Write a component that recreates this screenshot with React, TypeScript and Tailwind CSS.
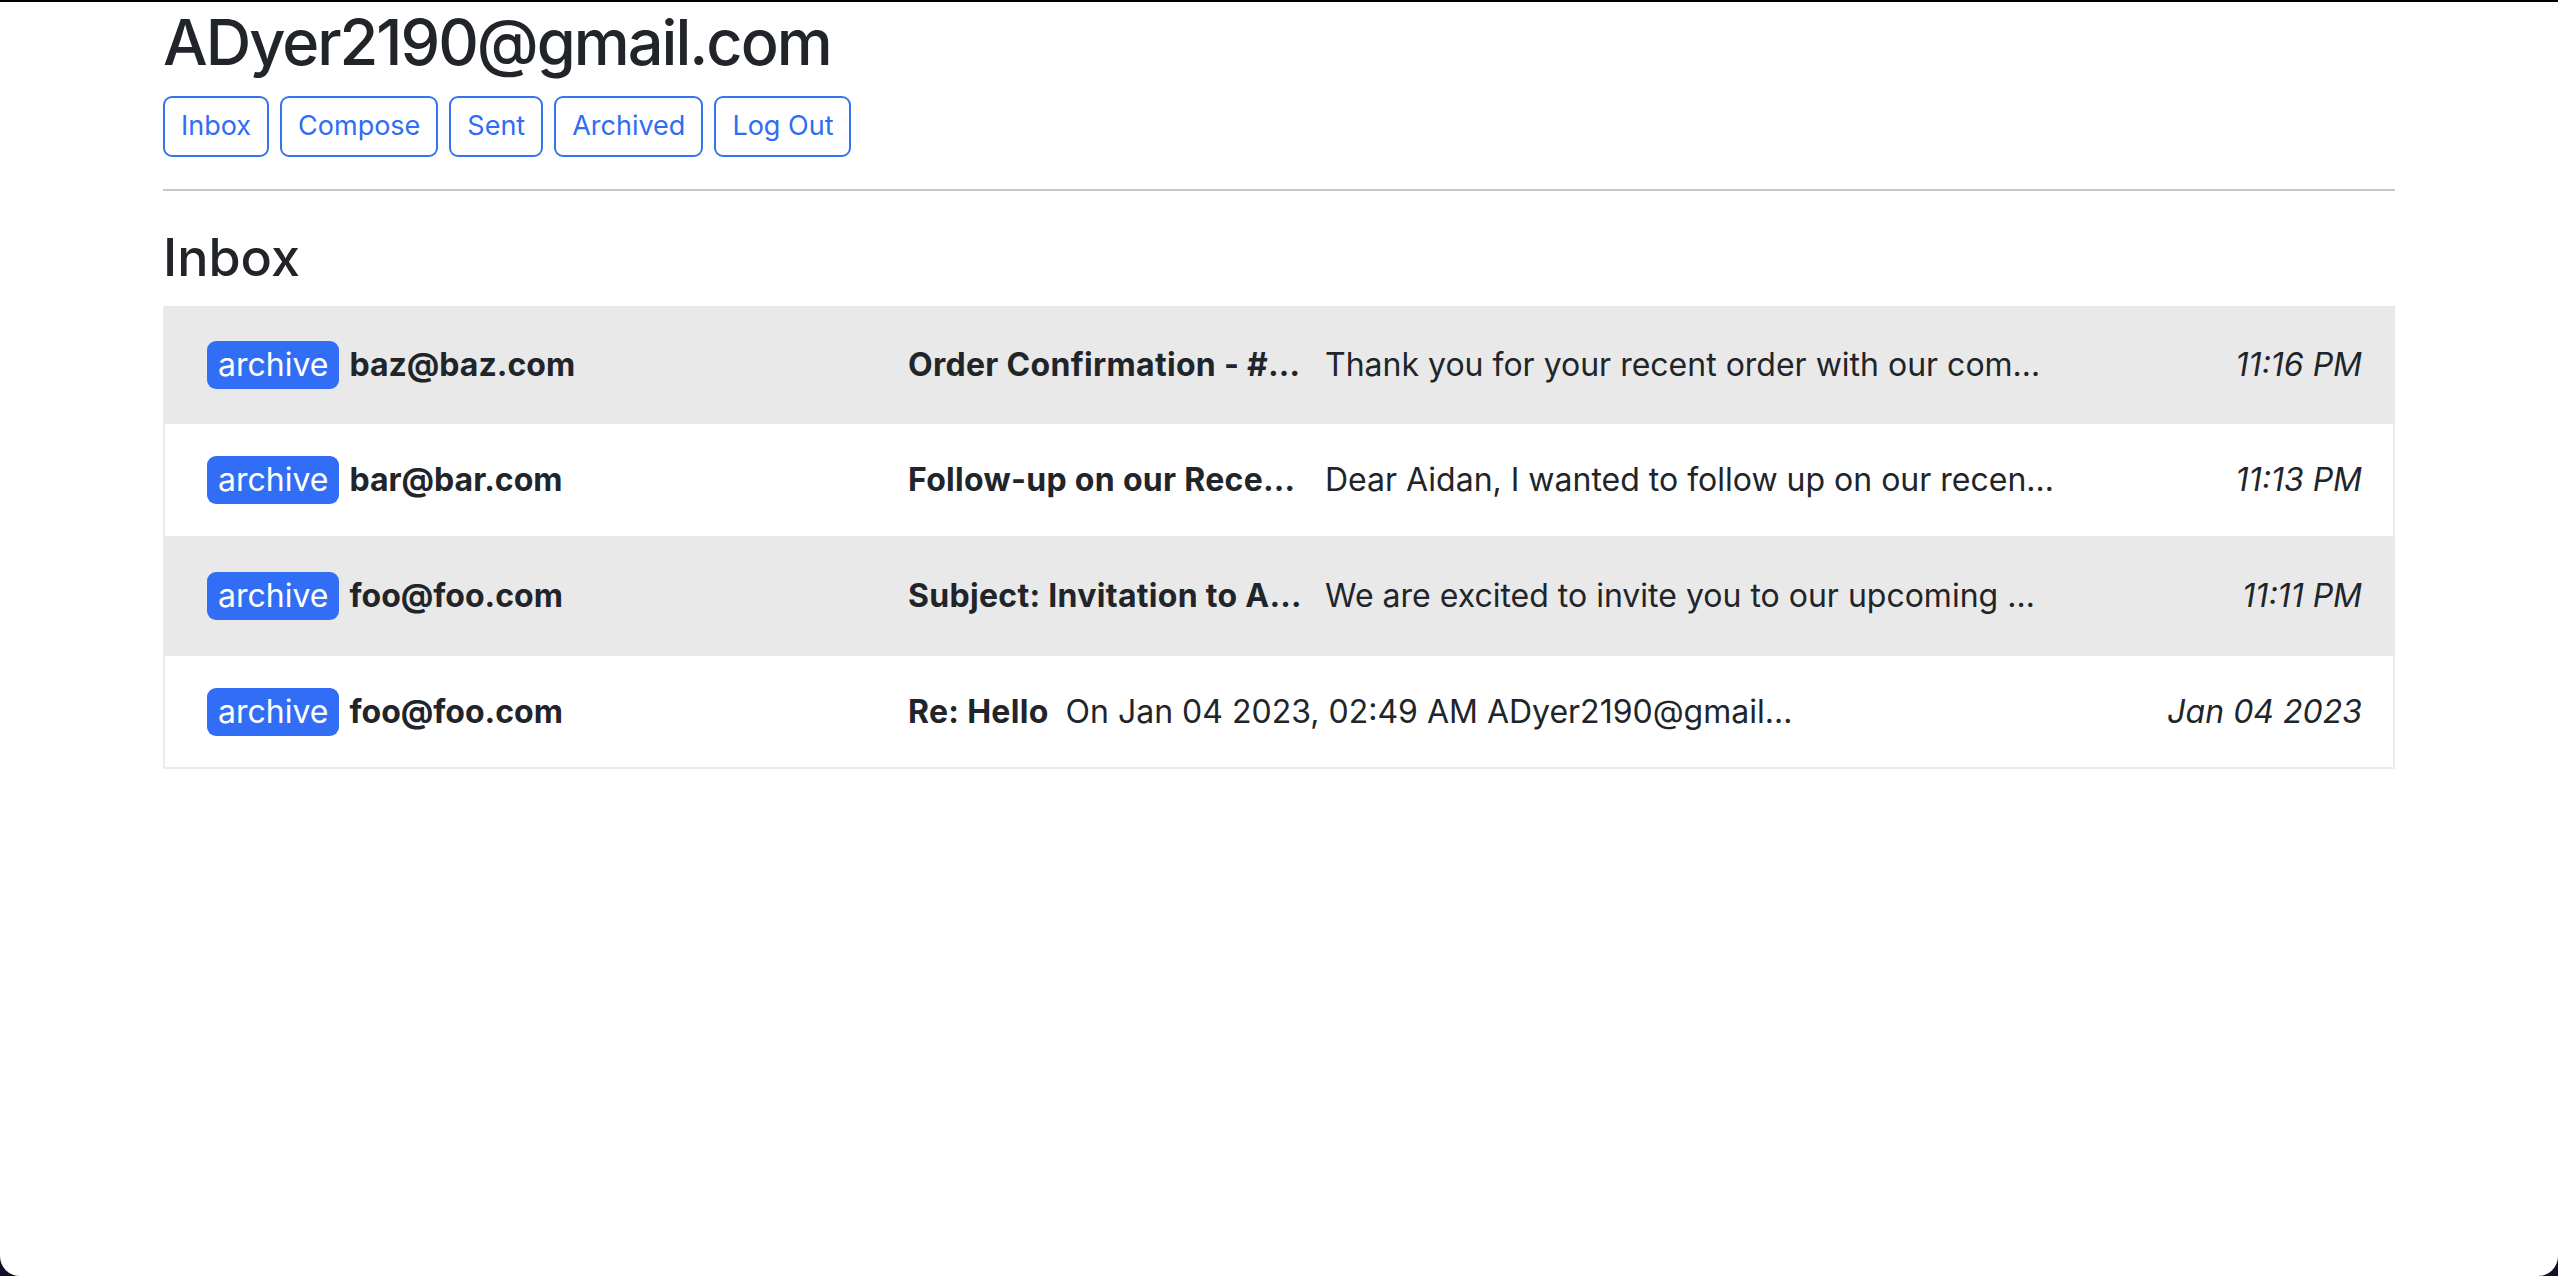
import React from "react";

type Email = {
  from: string;
  subject: string;
  body: string;
  time: string;
  shaded: boolean;
  height: string;
  subjectWidth: string;
};

const emails: Email[] = [
  {
    from: "baz@baz.com",
    subject: "Order Confirmation - #…",
    body: "Thank you for your recent order with our com…",
    time: "11:16 PM",
    shaded: true,
    height: "h-[118px]",
    subjectWidth: "w-[400px]",
  },
  {
    from: "bar@bar.com",
    subject: "Follow-up on our Rece…",
    body: "Dear Aidan, I wanted to follow up on our recen…",
    time: "11:13 PM",
    shaded: false,
    height: "h-[112px]",
    subjectWidth: "w-[400px]",
  },
  {
    from: "foo@foo.com",
    subject: "Subject: Invitation to A…",
    body: "We are excited to invite you to our upcoming …",
    time: "11:11 PM",
    shaded: true,
    height: "h-[120px]",
    subjectWidth: "w-[400px]",
  },
  {
    from: "foo@foo.com",
    subject: "Re: Hello",
    body: "On Jan 04 2023, 02:49 AM ADyer2190@gmail…",
    time: "Jan 04 2023",
    shaded: false,
    height: "h-[113px]",
    subjectWidth: "",
  },
];

const navItems = ["Inbox", "Compose", "Sent", "Archived", "Log Out"];

const EmailRow = ({ email, last }: { email: Email; last: boolean }) => (
  <div
    className={`flex items-center border-x-2 pl-[42px] pr-[31px] ${email.height} ${
      email.shaded ? "bg-[#e9e9e9] border-[#e9e9e9]" : "bg-white border-[#e9ebed]"
    } ${last ? "border-b-2" : ""}`}
  >
    <div className="flex w-[701px] shrink-0 items-center">
      <button className="h-[48px] rounded-[9px] bg-[#326ef5] px-[11px] text-[32px] leading-none text-white">
        archive
      </button>
      <span className="ml-[10px] text-[32px] font-bold">{email.from}</span>
    </div>
    <span
      className={`mr-[17px] shrink-0 whitespace-nowrap text-[32px] font-bold tracking-[0.3px] ${email.subjectWidth}`}
    >
      {email.subject}
    </span>
    <span className="whitespace-nowrap text-[32px]">{email.body}</span>
    <span className="ml-auto whitespace-nowrap text-[32px] italic">{email.time}</span>
  </div>
);

export default function App() {
  return (
    <div className="h-[1276px] w-full bg-[#10102a]">
      <div
        className="h-[1276px] w-full rounded-b-[20px] border-t-2 border-black bg-white text-[#212529]"
        style={{ fontFamily: "Inter, 'Noto Sans', sans-serif" }}
      >
        <div className="mx-auto w-[2232px]">
          <h1 className="pt-[1px] text-[63px] leading-[78px] font-medium tracking-[-2px]">
            ADyer2190@gmail.com
          </h1>
          <div className="mt-[15px] flex gap-[11px]">
            {navItems.map((item) => (
              <button
                key={item}
                className="h-[61px] rounded-[9px] border-2 border-[#3574f0] px-[16px] text-[27px] text-[#2f6df3]"
              >
                {item}
              </button>
            ))}
          </div>
          <hr className="mt-[32px] border-t-2 border-[#c8c8c8]" />
          <h2 className="mt-[36px] text-[52px] leading-[62px] font-medium">Inbox</h2>
          <div className="mt-[17px]">
            {emails.map((email, i) => (
              <EmailRow key={i} email={email} last={i === emails.length - 1} />
            ))}
          </div>
        </div>
      </div>
    </div>
  );
}
